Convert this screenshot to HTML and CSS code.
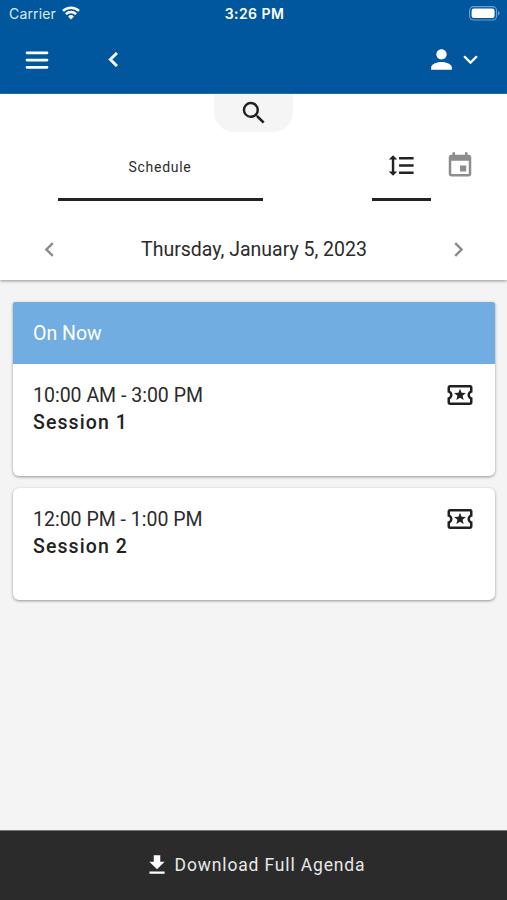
FILE: index.html
```html
<!DOCTYPE html>
<html lang="en">
<head>
<meta charset="utf-8">
<title>Schedule</title>
<link rel="stylesheet" href="styles.css">
</head>
<body>
<div class="app">
  <header class="top">
    <div class="status">
      <div class="carrier"><span>Carrier</span>
        <svg width="18" height="14" viewBox="0 0 18 14" fill="none" stroke="#fff" stroke-width="2.5"><path d="M1 4.9a11.5 11.5 0 0 1 16 0M3.9 8.1a7.3 7.3 0 0 1 10.2 0"/><path d="M9 13.4 6.1 10.5a4.2 4.2 0 0 1 5.8 0z" fill="#fff" stroke="none"/></svg>
      </div>
      <div class="clock">3:26 PM</div>
      <div class="battery"><svg width="31" height="15" viewBox="0 0 31 15"><rect x=".6" y=".6" width="27" height="13.4" rx="4" fill="none" stroke="#6f9fc9" stroke-width="1.1"/><rect x="2.6" y="2.6" width="23" height="9.4" rx="2.3" fill="#fff"/><path d="M29 5v4.6q1.6-.8 1.6-2.3T29 5z" fill="#6f9fc9"/></svg></div>
    </div>
    <nav class="nav">
      <svg class="menu" width="30" height="30" viewBox="0 0 24 24"><path d="M4 6.2h16M4 12h16M4 17.8h16" fill="none" stroke="#fff" stroke-width="2.2" stroke-linecap="round"/></svg>
      <svg class="back" width="29" height="29" viewBox="0 0 24 24"><path d="M15.41 7.41 14 6l-6 6 6 6 1.41-1.41L10.83 12z" stroke="#fff" stroke-width=".5"/></svg>
      <svg class="person" width="31" height="31" viewBox="0 0 24 24"><path d="M12 12c2.21 0 4-1.79 4-4s-1.79-4-4-4-4 1.79-4 4 1.79 4 4 4zm0 2c-2.67 0-8 1.34-8 4v2h16v-2c0-2.66-5.33-4-8-4z"/></svg>
      <svg width="29" height="29" viewBox="0 0 24 24"><path d="M7.41 8.59 12 13.17l4.59-4.58L18 10l-6 6-6-6z"/></svg>
    </nav>
  </header>

  <section class="filters">
    <div class="search"><svg width="30" height="30" viewBox="0 0 24 24"><path d="M15.5 14h-.79l-.28-.27A6.471 6.471 0 0 0 16 9.5 6.5 6.5 0 1 0 9.5 16c1.61 0 3.09-.59 4.23-1.57l.27.28v.79l5 4.99L20.49 19l-4.99-5zm-6 0C7.01 14 5 11.99 5 9.5S7.01 5 9.5 5 14 7.01 14 9.5 11.99 14 9.5 14z"/></svg></div>
    <div class="tabs">
      <div class="tab schedule active">Schedule</div>
      <div class="tab list active"><svg width="29" height="29" viewBox="0 0 24 24"><path d="M6 7h2.5L5 3.5 1.5 7H4v10H1.5L5 20.5 8.5 17H6V7zm4-2v2h12V5H10zm0 14h12v-2H10v2zm0-6h12v-2H10v2z"/></svg></div>
      <div class="tab calendar"><svg width="30" height="29" viewBox="0 0 24 24" preserveAspectRatio="none"><path d="M17 12h-5v5h5v-5zM16 1v2H8V1H6v2H5c-1.11 0-1.99.9-1.99 2L3 19a2 2 0 0 0 2 2h14c1.1 0 2-.9 2-2V5c0-1.1-.9-2-2-2h-1V1h-2zm3 18H5V8h14v11z"/></svg></div>
    </div>
    <div class="date">
      <svg width="29" height="29" viewBox="0 0 24 24"><path d="M15.41 7.41 14 6l-6 6 6 6 1.41-1.41L10.83 12z"/></svg>
      <span>Thursday, January 5, 2023</span>
      <svg width="29" height="29" viewBox="0 0 24 24"><path d="M10 6 8.59 7.41 13.17 12l-4.58 4.59L10 18l6-6z"/></svg>
    </div>
  </section>

  <main class="sessions">
    <article class="card live">
      <div class="banner">On Now</div>
      <div class="body">
        <div><div class="time">10:00 AM - 3:00 PM</div><div class="name">Session 1</div></div>
        <svg width="30" height="30" viewBox="0 0 24 24"><path d="M20 12c0-1.1.9-2 2-2V6a2 2 0 0 0-2-2H4c-1.1 0-1.99.9-1.99 2v4c1.1 0 1.99.9 1.99 2s-.89 2-2 2v4c0 1.1.9 2 2 2h16c1.1 0 2-.9 2-2v-4c-1.1 0-2-.9-2-2zm0-3.46a4 4 0 0 0 0 6.92V18H4v-2.54a4 4 0 0 0-.01-6.92L4 6h16v2.54zM9.07 16 12 14.12 14.93 16l-.89-3.36 2.69-2.2-3.47-.21L12 7l-1.27 3.22-3.47.21 2.69 2.2z"/></svg>
      </div>
    </article>
    <article class="card">
      <div class="body">
        <div><div class="time">12:00 PM - 1:00 PM</div><div class="name">Session 2</div></div>
        <svg width="30" height="30" viewBox="0 0 24 24"><path d="M20 12c0-1.1.9-2 2-2V6a2 2 0 0 0-2-2H4c-1.1 0-1.99.9-1.99 2v4c1.1 0 1.99.9 1.99 2s-.89 2-2 2v4c0 1.1.9 2 2 2h16c1.1 0 2-.9 2-2v-4c-1.1 0-2-.9-2-2zm0-3.46a4 4 0 0 0 0 6.92V18H4v-2.54a4 4 0 0 0-.01-6.92L4 6h16v2.54zM9.07 16 12 14.12 14.93 16l-.89-3.36 2.69-2.2-3.47-.21L12 7l-1.27 3.22-3.47.21 2.69 2.2z"/></svg>
      </div>
    </article>
  </main>

  <footer class="download">
    <svg width="26" height="26" viewBox="0 0 24 24"><path d="M19 9h-4V3H9v6H5l7 7 7-7zM5 18v2h14v-2H5z"/></svg>
    <span>Download Full Agenda</span>
  </footer>
</div>
</body>
</html>
```
FILE: styles.css
```css
* { box-sizing: border-box; }
body { margin: 0; font-family: Roboto, "Liberation Sans", sans-serif; color: #2b2b2b; }
svg { display: block; flex: none; }
.app { height: 900px; display: flex; flex-direction: column; background: #f4f4f4; overflow: hidden; }

.top { height: 94px; background: #01579d; color: #fff; border-bottom: 1px solid #2e76b0; flex: none; }
.status { height: 27px; display: grid; grid-template-columns: 1fr auto 1fr; align-items: center; padding: 0 7px 0 9px; font-family: Inter, sans-serif; font-size: 14px; }
.carrier { display: flex; align-items: center; gap: 6px; color: #dce9f4; letter-spacing: 0.15px; }
.carrier svg { margin-top: -2px; }
.clock { font-weight: 600; font-size: 14px; letter-spacing: 0.45px; }
.battery { justify-self: end; }
.nav { height: 65px; display: flex; align-items: center; padding: 0 22px; fill: #fff; }
.back { margin-left: 47px; }
.person { margin-left: auto; margin-right: -1px; }

.filters { height: 186px; flex: none; background: #fff; display: flex; flex-direction: column; align-items: center; box-shadow: 0 1px 3px rgba(0, 0, 0, 0.4); }
.search { width: 79px; height: 38px; background: #f5f5f5; border-radius: 0 0 20px 20px; display: flex; justify-content: center; padding-top: 4px; fill: #222; }
.tabs { width: 100%; height: 69px; display: flex; padding-left: 58px; }
.tab { height: 69px; display: flex; align-items: center; justify-content: center; }
.active { border-bottom: 3px solid #222; }
.schedule { width: 205px; font-size: 14px; letter-spacing: 0.7px; padding: 3px 1px 0 0; }
.list { width: 59px; margin-left: 109px; fill: #222; padding-right: 1px; }
.calendar { width: 58px; fill: #8d8d8d; padding-bottom: 2px; }
.date { width: 100%; height: 79px; display: flex; align-items: center; justify-content: space-between; padding: 18px 34px 0 35px; font-size: 19.5px; fill: #8b8b8b; }

.sessions { flex: 1; display: flex; flex-direction: column; gap: 12px; padding: 22px 12px 0 13px; }
.card { background: #fff; border-radius: 6px; overflow: hidden; box-shadow: 0 1px 3px rgba(0, 0, 0, 0.4); height: 112px; }
.live { height: 174px; border-radius: 2px 2px 6px 6px; }
.banner { height: 62px; background: #72ade1; color: #fff; padding: 0 20px; line-height: 63px; font-size: 19.5px; }
.body { display: flex; justify-content: space-between; padding: 16px 20px 0 20px; fill: #202020; }
.time { font-size: 19.5px; line-height: 32px; }
.name { font-size: 19.5px; line-height: 22px; font-weight: 500; letter-spacing: 1.1px; color: #222; }

.download { height: 70px; flex: none; background: #2b2b2b; color: #e8e8e8; fill: #fff; display: flex; align-items: center; justify-content: center; gap: 5px; font-size: 17.5px; letter-spacing: 0.85px; border-top: 1px solid #777; padding: 0 0 2px 2px; }
```
